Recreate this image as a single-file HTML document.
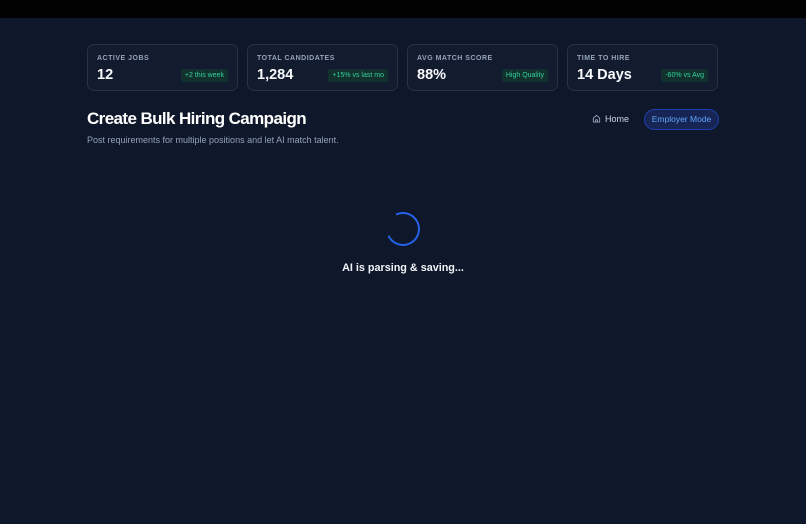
<!DOCTYPE html>
<html><head><style>
*{margin:0;padding:0;box-sizing:border-box}
body{width:806px;height:524px;background:#0f172a;font-family:"Liberation Sans",sans-serif;position:relative;overflow:hidden}
.top{position:absolute;left:0;top:0;width:806px;height:18px;background:#020202}
.card{position:absolute;top:44px;width:151px;height:47px;border:1px solid #263246;border-radius:7px;background:#131c2f}
.lbl{position:absolute;left:9px;top:10px;font-size:7px;font-weight:bold;letter-spacing:.5px;color:#94a3b8}
.val{position:absolute;left:9px;top:22px;font-size:14.5px;font-weight:bold;color:#f8fafc}
.bd{position:absolute;right:9px;top:24px;height:13px;line-height:13px;padding:0 4px;font-size:7px;color:#34d399;background:#11302e;border-radius:2px}
h1{position:absolute;left:87px;top:109px;font-size:17px;letter-spacing:-0.6px;color:#fff;font-weight:bold}
.sub{position:absolute;left:87px;top:135px;font-size:9px;color:#94a3b8}
.home{position:absolute;left:592px;top:114px;font-size:9px;color:#cbd5e1}
.emp{position:absolute;left:644px;top:109px;width:75px;height:21px;border:1px solid #1e40af;border-radius:11px;background:#172554;color:#60a5fa;font-size:8.5px;text-align:center;line-height:19px}
.spin{position:absolute;left:386px;top:212px;width:34px;height:34px;border-radius:50%;border:2.5px solid #2563eb;border-left-color:transparent;transform:rotate(20deg)}
.ai{position:absolute;left:0;width:806px;text-align:center;top:262px;font-size:10.8px;font-weight:bold;color:#f1f5f9}
</style></head><body>
<div class="top"></div>
<div class="card" style="left:87px"><div class="lbl">ACTIVE JOBS</div><div class="val">12</div><div class="bd">+2 this week</div></div>
<div class="card" style="left:247px"><div class="lbl">TOTAL CANDIDATES</div><div class="val">1,284</div><div class="bd">+15% vs last mo</div></div>
<div class="card" style="left:407px"><div class="lbl">AVG MATCH SCORE</div><div class="val">88%</div><div class="bd">High Quality</div></div>
<div class="card" style="left:567px"><div class="lbl">TIME TO HIRE</div><div class="val">14 Days</div><div class="bd">-60% vs Avg</div></div>
<h1>Create Bulk Hiring Campaign</h1>
<div class="sub">Post requirements for multiple positions and let AI match talent.</div>
<div class="home"><svg width="9" height="9" viewBox="0 0 10 10" style="vertical-align:-1px;margin-right:4px"><path d="M1.5 4.5L5 1.5l3.5 3V9h-7z M4 9V6.5h2V9" fill="none" stroke="#94a3b8" stroke-width="1"/></svg>Home</div>
<div class="emp">Employer Mode</div>
<div class="spin"></div>
<div class="ai">AI is parsing &amp; saving...</div>
</body></html>
